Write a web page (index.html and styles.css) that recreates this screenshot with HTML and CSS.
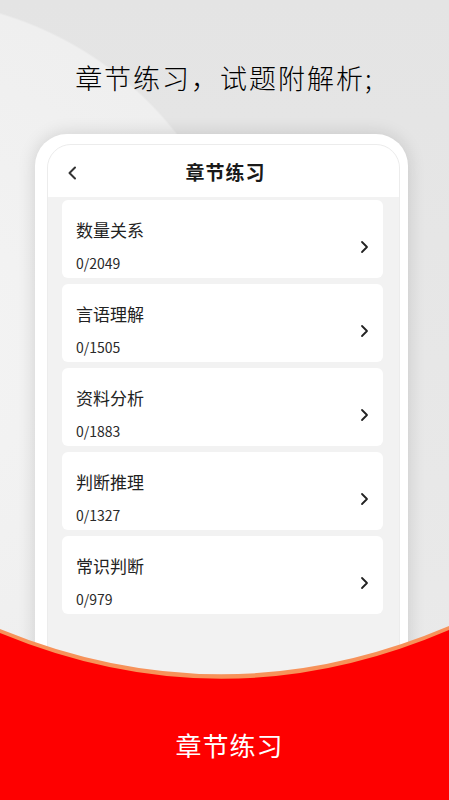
FILE: index.html
```html
<!DOCTYPE html>
<html lang="zh">

<head>
  <meta charset="UTF-8" />
  <meta name="viewport" content="width=device-width, initial-scale=1.0" />
  <title>章节练习</title>
  <link rel="stylesheet" href="styles.css">
</head>

<body>
  <h1 class="headline">章节练习，试题附解析;</h1>

  <div class="phone">
    <div class="screen">
      <div class="topBar">
        <svg class="backIcon" width="10" height="14" viewBox="0 0 10 14">
          <polyline points="8,1.5 2.5,7 8,12.5" fill="none" stroke="#333" stroke-width="2" stroke-linecap="round" stroke-linejoin="round" />
        </svg>
        <div class="pageTitle">章节练习</div>
      </div>

      <section class="chapterList">
        <div class="chapter">
          <div>
            <p class="chapterName">数量关系</p>
            <p class="chapterCount">0/2049</p>
          </div>
          <svg class="arrow" width="9" height="14" viewBox="0 0 9 14">
            <polyline points="2,2 7,7 2,12" fill="none" stroke="#222" stroke-width="1.8" stroke-linecap="round" stroke-linejoin="round" />
          </svg>
        </div>
        <div class="chapter">
          <div>
            <p class="chapterName">言语理解</p>
            <p class="chapterCount">0/1505</p>
          </div>
          <svg class="arrow" width="9" height="14" viewBox="0 0 9 14">
            <polyline points="2,2 7,7 2,12" fill="none" stroke="#222" stroke-width="1.8" stroke-linecap="round" stroke-linejoin="round" />
          </svg>
        </div>
        <div class="chapter">
          <div>
            <p class="chapterName">资料分析</p>
            <p class="chapterCount">0/1883</p>
          </div>
          <svg class="arrow" width="9" height="14" viewBox="0 0 9 14">
            <polyline points="2,2 7,7 2,12" fill="none" stroke="#222" stroke-width="1.8" stroke-linecap="round" stroke-linejoin="round" />
          </svg>
        </div>
        <div class="chapter">
          <div>
            <p class="chapterName">判断推理</p>
            <p class="chapterCount">0/1327</p>
          </div>
          <svg class="arrow" width="9" height="14" viewBox="0 0 9 14">
            <polyline points="2,2 7,7 2,12" fill="none" stroke="#222" stroke-width="1.8" stroke-linecap="round" stroke-linejoin="round" />
          </svg>
        </div>
        <div class="chapter">
          <div>
            <p class="chapterName">常识判断</p>
            <p class="chapterCount">0/979</p>
          </div>
          <svg class="arrow" width="9" height="14" viewBox="0 0 9 14">
            <polyline points="2,2 7,7 2,12" fill="none" stroke="#222" stroke-width="1.8" stroke-linecap="round" stroke-linejoin="round" />
          </svg>
        </div>
      </section>
    </div>
  </div>

  <!-- red wave banner over the phone bottom -->
  <div class="banner">
    <svg class="wave" width="449" height="174" viewBox="0 0 449 174" preserveAspectRatio="none">
      <path d="M0 3 Q225 95 449 0 L449 174 L0 174 Z" fill="#f7925a" />
      <path d="M0 7 Q225 100 449 4 L449 174 L0 174 Z" fill="#fe0000" />
    </svg>
    <div class="bannerText">章节练习</div>
  </div>
</body>

</html>
```

FILE: styles.css
```css
* {
  padding: 0;
  margin: 0;
  box-sizing: border-box;
}

body {
  position: relative;
  width: 449px;
  height: 800px;
  overflow: hidden;
  font-family: "Noto Sans CJK SC", "Noto Sans", sans-serif;
  background:
    radial-gradient(circle at -100px 350px, #f4f4f4 0, #efefef 350px, rgba(240, 240, 240, 0) 352px),
    linear-gradient(180deg, #e4e4e4 0%, #e8e8e8 60%, #ebebeb 100%);
}

.headline {
  padding-top: 61px;
  text-align: center;
  font-size: 27px;
  line-height: 34px;
  font-weight: 300;
  color: #000;
  letter-spacing: 2px;
}

.phone {
  width: 373px;
  height: 700px;
  margin: 39px 0 0 35px;
  padding: 10px 8px 0 12px;
  background: #fff;
  border-radius: 32px 32px 0 0;
  box-shadow: 0 0 18px rgba(0, 0, 0, 0.14);
}

.screen {
  height: 100%;
  background: #f2f2f2;
  border: 1px solid #ececec;
  border-radius: 24px 24px 0 0;
  overflow: hidden;
}

.topBar {
  position: relative;
  height: 52px;
  background: #fff;
  display: flex;
  align-items: center;
  justify-content: center;
}

.backIcon {
  position: absolute;
  left: 19px;
  top: 21px;
}

.pageTitle {
  font-size: 19px;
  font-weight: 700;
  color: #1a1a1a;
  margin-left: 4px;
  letter-spacing: 1px;
}

.chapterList {
  display: flex;
  flex-direction: column;
  gap: 6px;
  padding: 3px 16px 0 14px;
}

.chapter {
  height: 78px;
  background: #fff;
  border-radius: 6px;
  padding: 19px 14px 0 14px;
  display: flex;
  justify-content: space-between;
  align-items: flex-start;
}

.chapterName {
  font-size: 17px;
  line-height: 22px;
  color: #222;
}

.chapterCount {
  margin-top: 13px;
  font-size: 14px;
  line-height: 18px;
  color: #2a2a2a;
}

.arrow {
  margin-top: 21px;
}

.banner {
  position: absolute;
  left: 0;
  bottom: 0;
  width: 449px;
  height: 174px;
}

.wave {
  position: absolute;
  left: 0;
  top: 0;
}

.bannerText {
  position: absolute;
  left: 0;
  right: 0;
  top: 102px;
  text-align: center;
  font-size: 26px;
  line-height: 34px;
  font-weight: 400;
  color: #fff;
  letter-spacing: 1px;
  padding-left: 10px;
}
```
